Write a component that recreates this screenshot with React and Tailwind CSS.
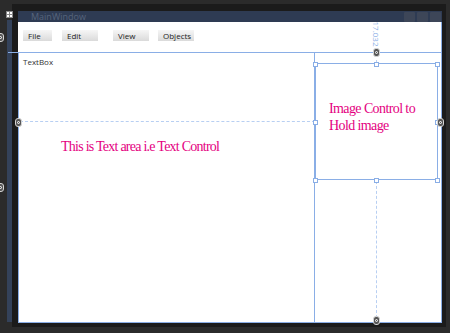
import React from 'react';

const Handle = ({ className }) => (
  <div className={`absolute w-[5px] h-[5px] bg-white border border-[#8aaee6] ${className}`} />
);

const Pin = ({ className }) => (
  <div className={`absolute w-[7px] h-[9px] rounded-[3px] bg-[#555] border border-[#d4d4d4] flex items-center justify-center ${className}`}>
    <div className="w-[3px] h-[3px] rounded-full border border-white" />
  </div>
);

const MenuButton = ({ label, w }) => (
  <div
    className="h-[11px] flex items-center pl-[5px] text-[8px] leading-none text-[#222] bg-gradient-to-b from-[#f6f6f6] to-[#dadada]"
    style={{ width: w }}
  >
    {label}
  </div>
);

const App = () => {
  const ui = { fontFamily: '"Open Sans", "DejaVu Sans", sans-serif' };
  const serif = { fontFamily: '"Liberation Serif", serif' };

  return (
    <div className="relative w-[450px] h-[333px] bg-[#2b2b2b] overflow-hidden flex" style={ui}>
      {/* left gutter */}
      <div className="w-[12px] shrink-0 flex flex-col pl-[7px] pt-[20px]">
        <div className="w-[5px] h-[302px] bg-[#34425a]" />
      </div>

      {/* window frame */}
      <div className="mt-[4px] w-[434px] shrink-0 h-[323px] bg-[#1b1b1b] pl-[6px] pr-[4px] pt-[7px] pb-[4px] flex flex-col">
        {/* title bar */}
        <div className="h-[11px] bg-[#2e3b53] flex items-center pl-[13px] pr-[1px]">
          <span className="text-[9px] leading-none text-[#56647c] flex-1">MainWindow</span>
          <div className="flex gap-[2px]">
            <div className="w-[11px] h-[10px] bg-[#3d4658] rounded-[1px]" />
            <div className="w-[11px] h-[10px] bg-[#3d4658] rounded-[1px]" />
            <div className="w-[11px] h-[10px] bg-[#3d4658] rounded-[1px]" />
          </div>
        </div>

        {/* client area */}
        <div className="relative flex-1 bg-white flex flex-col border-r border-[#8aaee6]">
          {/* menu row */}
          <div className="h-[30px] flex items-start pt-[8px] pl-[5px]">
            <MenuButton label="File" w={29} />
            <div className="w-[10px]" />
            <MenuButton label="Edit" w={36} />
            <div className="w-[15px]" />
            <MenuButton label="View" w={36} />
            <div className="w-[9px]" />
            <MenuButton label="Objects" w={36} />
          </div>

          {/* grid */}
          <div className="flex-1 flex border-t border-[#8aaee6] border-b">
            {/* text box */}
            <div className="relative w-[297px] shrink-0 border-l border-r border-[#8aaee6] bg-white">
              <div className="pl-[4px] pt-[5px] text-[8px] leading-none text-[#333]">TextBox</div>
              <div
                className="pl-[42px] pt-[74px] text-[14px] leading-none text-[#e4007f] tracking-[-0.75px]"
                style={serif}
              >
                This is Text area i.e Text Control
              </div>
            </div>

            {/* image column */}
            <div className="relative flex-1 pt-[10px] pr-[4px]">
              <div className="relative w-[123px] h-[117px] border border-[#8aaee6] pl-[13px] pt-[36px]">
                <div
                  className="text-[14px] leading-[17px] text-[#e4007f] tracking-[-0.6px]"
                  style={serif}
                >
                  Image Control to
                  <br />
                  Hold image
                </div>
              </div>
            </div>
          </div>
        </div>
      </div>

      {/* designer adorners */}
      <div className="absolute left-[20px] top-[121px] w-[295px] border-t border-dashed border-[#b8cff2]" />
      <div className="absolute left-[437px] top-[121px] w-[5px] border-t border-dashed border-[#b8cff2]" />
      <div className="absolute left-[376px] top-[181px] h-[137px] border-l border-dashed border-[#b8cff2]" />
      <div className="absolute left-[376px] top-[54px] h-[9px] border-l border-dashed border-[#b8cff2]" />
      <div className="absolute left-[8px] top-[52px] w-[10px] h-[1px] bg-[#8aaee6]" />

      <Handle className="left-[313px] top-[62px]" />
      <Handle className="left-[374px] top-[62px]" />
      <Handle className="left-[435px] top-[62px]" />
      <Handle className="left-[313px] top-[120px]" />
      <Handle className="left-[435px] top-[120px]" />
      <Handle className="left-[313px] top-[178px]" />
      <Handle className="left-[374px] top-[178px]" />
      <Handle className="left-[435px] top-[178px]" />

      <Pin className="left-[373px] top-[48px]" />
      <Pin className="left-[373px] top-[316px]" />
      <Pin className="left-[437px] top-[118px]" />
      <Pin className="left-[15px] top-[118px]" />
      <Pin className="left-[-3px] top-[33px]" />
      <Pin className="left-[-3px] top-[183px]" />

      {/* top-left grid icon */}
      <div className="absolute left-[6px] top-[11px] w-[7px] h-[7px] grid grid-cols-2 gap-[1px] bg-[#888] p-[1px]">
        <div className="bg-white" />
        <div className="bg-white" />
        <div className="bg-white" />
        <div className="bg-white" />
      </div>

      {/* column width label */}
      <div className="absolute left-[362px] top-[30px] w-[28px] h-[8px] flex items-center justify-center rotate-90">
        <span className="text-[8px] leading-none text-[#8aaee6] whitespace-nowrap">17.032</span>
      </div>
    </div>
  );
};

export default App;
